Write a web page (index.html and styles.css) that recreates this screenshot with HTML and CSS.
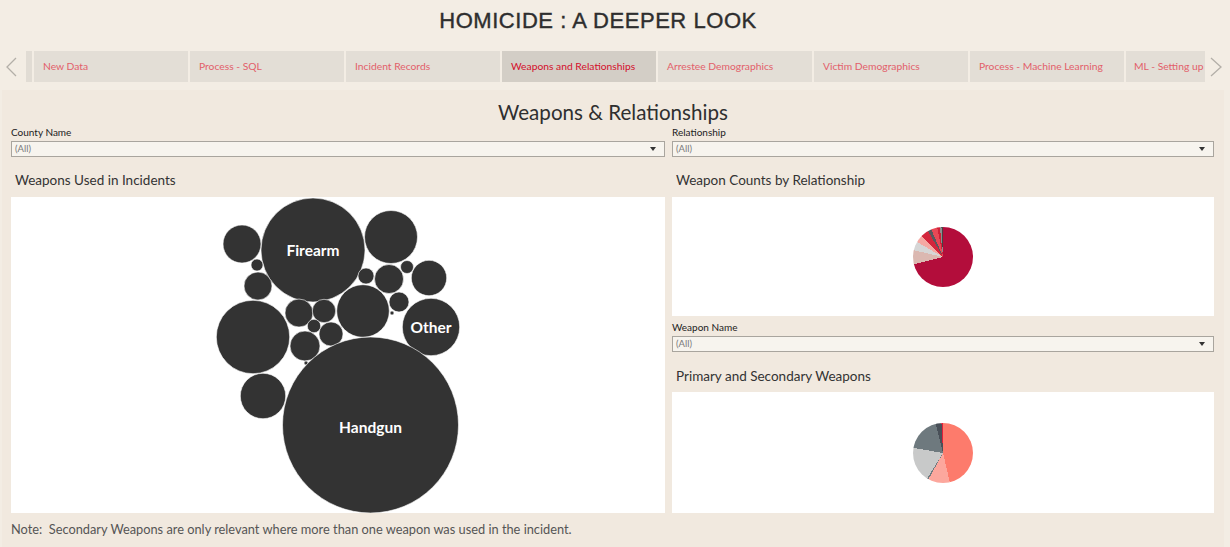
FILE: index.html
```html
<!DOCTYPE html>
<html lang="en">
<head>
<meta charset="utf-8">
<title>Homicide : A Deeper Look</title>
<link rel="stylesheet" href="styles.css">
</head>
<body>
<h1 class="top-title">HOMICIDE : A DEEPER LOOK</h1>
<div class="tabs">
  <div class="tab-arrow">
    <svg width="26" height="31" viewBox="0 0 26 31"><polyline points="16,7 7,16 16,25" fill="none" stroke="#b3afa8" stroke-width="1.3"/></svg>
  </div>
  <div class="tab-track">
    <div class="tab-strip"></div>
    <div class="tab">New Data</div>
    <div class="tab">Process - SQL</div>
    <div class="tab">Incident Records</div>
    <div class="tab active">Weapons and Relationships</div>
    <div class="tab">Arrestee Demographics</div>
    <div class="tab">Victim Demographics</div>
    <div class="tab">Process - Machine Learning</div>
    <div class="tab tab-last">ML - Setting up</div>
  </div>
  <div class="tab-arrow right">
    <svg width="25" height="31" viewBox="0 0 25 31"><polyline points="6,7 16,16 6,25" fill="none" stroke="#b3afa8" stroke-width="1.3"/></svg>
  </div>
</div>
<div class="dash">
  <div class="dash-title">Weapons &amp; Relationships</div>
  <div class="dash-body">
    <div class="col col-left">
      <div class="filter-label">County Name</div>
      <div class="select">(All)</div>
      <div class="chart-title">Weapons Used in Incidents</div>
      <div class="chart chart-bubbles">
        <svg width="654" height="316" viewBox="0 0 654 316">
          <g fill="#333333" stroke="#ffffff" stroke-width="0.6">
            <circle cx="302" cy="53" r="52"/>
            <circle cx="231" cy="47" r="19"/>
            <circle cx="246" cy="68" r="6"/>
            <circle cx="247" cy="89" r="14"/>
            <circle cx="380" cy="40" r="26.5"/>
            <circle cx="396" cy="70" r="6.5"/>
            <circle cx="418" cy="81" r="17.7"/>
            <circle cx="355" cy="79" r="8"/>
            <circle cx="378" cy="82" r="14.5"/>
            <circle cx="388" cy="105" r="10"/>
            <circle cx="381" cy="116" r="2"/>
            <circle cx="352" cy="114" r="26.3"/>
            <circle cx="420" cy="130" r="28.7"/>
            <circle cx="242" cy="140" r="36.7"/>
            <circle cx="288" cy="116" r="14"/>
            <circle cx="313" cy="114" r="11.7"/>
            <circle cx="303" cy="129" r="6.7"/>
            <circle cx="320" cy="137" r="12"/>
            <circle cx="294" cy="149" r="15"/>
            <circle cx="295" cy="166" r="2"/>
            <circle cx="359.5" cy="228" r="88"/>
            <circle cx="252" cy="199" r="22.7"/>
          </g>
          <g class="bubble-label">
            <text x="302" y="53">Firearm</text>
            <text x="420" y="130">Other</text>
            <text x="359.5" y="230">Handgun</text>
          </g>
        </svg>
      </div>
    </div>
    <div class="col col-right">
      <div class="filter-label">Relationship</div>
      <div class="select">(All)</div>
      <div class="chart-title">Weapon Counts by Relationship</div>
      <div class="chart chart-top">
        <div class="pie pie-relationship"></div>
      </div>
      <div class="filter-label filter-mid">Weapon Name</div>
      <div class="select">(All)</div>
      <div class="chart-title chart-title-low">Primary and Secondary Weapons</div>
      <div class="chart chart-bottom">
        <div class="pie pie-weapons"></div>
      </div>
    </div>
  </div>
  <div class="note">Note:&nbsp; Secondary Weapons are only relevant where more than one weapon was used in the incident.</div>
</div>
</body>
</html>
```
FILE: styles.css
```css
html, body {
  margin: 0;
  padding: 0;
}
body {
  background: #f3ede4;
  font-family: Lato, "Noto Sans", "DejaVu Sans", sans-serif;
  width: 1230px;
  height: 547px;
  overflow: hidden;
}
.top-title {
  margin: 0;
  height: 51px;
  line-height: 41px;
  padding-right: 34px;
  text-align: center;
  font-family: "Liberation Sans", Arial, sans-serif;
  font-weight: 400;
  font-size: 22px;
  letter-spacing: 0.55px;
  color: #2e2e2e;
  -webkit-text-stroke: 0.4px #2e2e2e;
}
.tabs {
  display: flex;
  height: 31px;
  margin-bottom: 8px;
}
.tab-arrow {
  width: 26px;
  flex: none;
}
.tab-arrow.right {
  width: 25px;
}
.tab-arrow svg {
  display: block;
}
.tab-track {
  width: 1179px;
  flex: none;
  display: flex;
  gap: 2px;
  overflow: hidden;
}
.tab-strip {
  width: 6px;
  flex: none;
  background: #e1dcd4;
}
.tab {
  width: 154px;
  flex: none;
  box-sizing: border-box;
  padding-left: 9px;
  background: #e3ded6;
  color: #e2606a;
  font-size: 10.3px;
  line-height: 31px;
  white-space: nowrap;
  overflow: hidden;
}
.tab-last {
  width: 79px;
  padding-left: 8px;
}
.tab.active {
  background: #d3cec6;
  color: #d30f2b;
}
.dash {
  margin-left: 2px;
  width: 1222px;
  height: 457px;
  background: #f1e9df;
}
.dash-title {
  text-align: center;
  font-size: 20.6px;
  line-height: 28px;
  padding-top: 8px;
  color: #2f2f2f;
}
.dash-body {
  display: flex;
  gap: 7px;
  padding-left: 9px;
}
.col-left {
  width: 654px;
}
.col-right {
  width: 542px;
}
.filter-label {
  font-size: 10px;
  line-height: 12px;
  color: #222;
  height: 12px;
}
.filter-mid {
  margin-top: 5px;
}
.select {
  position: relative;
  margin-top: 3px;
  height: 16px;
  box-sizing: border-box;
  border: 1px solid #a9a59e;
  background: #f7f4ee;
  font-size: 9.5px;
  line-height: 14px;
  padding-left: 3px;
  color: #7a7a7a;
}
.select::after {
  content: "";
  position: absolute;
  right: 8px;
  top: 5px;
  width: 0;
  height: 0;
  border-left: 3px solid transparent;
  border-right: 3px solid transparent;
  border-top: 4px solid #333;
}
.chart-title {
  padding: 15px 0 9px 4px;
  font-size: 13.5px;
  line-height: 16px;
  color: #333;
}
.chart-title-low {
  padding: 16px 0 8px 4px;
}
.chart {
  background: #ffffff;
}
.chart-bubbles {
  height: 316px;
}
.chart-bubbles svg {
  display: block;
}
.bubble-label text {
  fill: #ffffff;
  font-family: Lato, "Noto Sans", sans-serif;
  font-weight: 700;
  font-size: 15.5px;
  text-anchor: middle;
  dominant-baseline: central;
}
.chart-top,
.chart-bottom {
  display: flex;
  align-items: center;
  justify-content: center;
}
.chart-top {
  height: 119px;
}
.chart-bottom {
  height: 121px;
}
.pie {
  width: 60px;
  height: 60px;
  border-radius: 50%;
}
.pie-relationship {
  background: conic-gradient(
    #b30d3b 0deg 256deg,
    #dbb8b1 256deg 283deg,
    #d6d6d6 283deg 300deg,
    #f5a9a3 300deg 314deg,
    #d3263c 314deg 330deg,
    #58585d 330deg 337deg,
    #e84856 337deg 349deg,
    #cf2037 349deg 354deg,
    #8e8e8e 354deg 357deg,
    #444444 357deg 360deg
  );
}
.pie-weapons {
  background: conic-gradient(
    #fd7b6c 0deg 167deg,
    #fca79d 167deg 209deg,
    #707b80 209deg 212deg,
    #c8c9c9 212deg 280deg,
    #6e797e 280deg 346deg,
    #495058 346deg 357deg,
    #e0203a 357deg 360deg
  );
}
.note {
  padding: 9px 0 0 9px;
  font-size: 12.8px;
  line-height: 14px;
  color: #555;
}
```
